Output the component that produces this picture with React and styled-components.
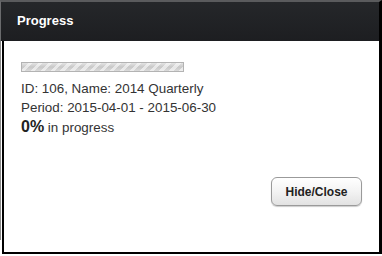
import React from "react";
import styled, { createGlobalStyle } from "styled-components";

const Global = createGlobalStyle`
  html, body { margin: 0; padding: 0; background: #fff; }
  body { font-family: "Liberation Sans", Arial, sans-serif; }
`;

const Frame = styled.div`
  width: 382px;
  height: 254px;
  display: flex;
  flex-direction: column;
  box-sizing: border-box;
`;

const Header = styled.div`
  height: 41px;
  box-sizing: border-box;
  border-top: 2px solid #5a5b5d;
  border-left: 1px solid #6a6b6d;
  border-right: 3px solid #000;
  background: linear-gradient(#25272a, #1d1e21);
  display: flex;
  align-items: center;
  padding: 0 0 2px 16px;
  color: #fff;
  font-weight: bold;
  font-size: 13px;
`;

const Row = styled.div`
  flex: 1;
  display: flex;
`;

const Strip = styled.div`
  width: 1px;
  height: 199px;
  background: #8a8a8a;
  margin-right: 1px;
`;

const Body = styled.div`
  flex: 1;
  box-sizing: border-box;
  border-left: 2px solid #000;
  border-right: 3px solid #000;
  border-bottom: 2px solid #000;
  padding: 21px 17px 0 17px;
  display: flex;
  flex-direction: column;
  color: #333;
  font-size: 13.4px;
`;

const Bar = styled.div`
  width: 163px;
  height: 10px;
  box-sizing: border-box;
  border: 1px solid #b3b3b3;
  background:
    repeating-linear-gradient(
      -45deg,
      rgba(255,255,255,0.55) 0 3px,
      rgba(255,255,255,0) 3px 7px
    ),
    linear-gradient(#e4e4e4, #c8c8c8 50%, #dadada);
  margin-bottom: 7px;
`;

const Line = styled.div`
  line-height: 19px;
  white-space: nowrap;
`;

const Percent = styled.span`
  font-weight: bold;
  font-size: 16px;
  color: #222;
`;

const Actions = styled.div`
  display: flex;
  justify-content: flex-end;
  margin-top: 40px;
`;

const Button = styled.button`
  width: 91px;
  height: 29px;
  border: 1px solid #9a9a9a;
  border-radius: 6px;
  background: linear-gradient(#ffffff, #f3f3f3 50%, #e2e2e2);
  box-shadow: 0 1px 1px rgba(0,0,0,0.2);
  font-family: "Liberation Sans", Arial, sans-serif;
  font-weight: bold;
  font-size: 12px;
  color: #222;
  padding: 0;
`;

export default function App() {
  return (
    <>
      <Global />
      <Frame>
        <Header>Progress</Header>
        <Row>
          <Strip />
          <Body>
            <Bar />
            <Line>ID: 106, Name: 2014 Quarterly</Line>
            <Line>Period: 2015-04-01 - 2015-06-30</Line>
            <Line>
              <Percent>0%</Percent> in progress
            </Line>
            <Actions>
              <Button>Hide/Close</Button>
            </Actions>
          </Body>
        </Row>
      </Frame>
    </>
  );
}
